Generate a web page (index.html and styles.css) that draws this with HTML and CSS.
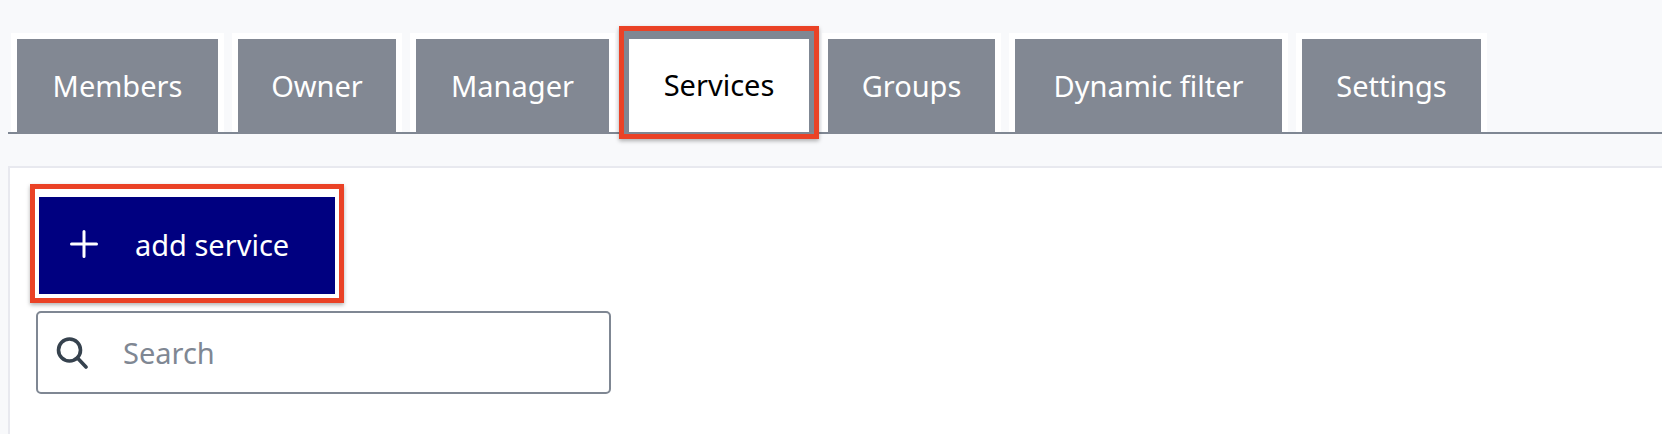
FILE: index.html
```html
<!DOCTYPE html>
<html lang="en">
<head>
    <meta charset="UTF-8">
    <meta name="viewport" content="width=device-width, initial-scale=1.0">
    <title>Services</title>
    <link rel="stylesheet" href="styles.css">
</head>
<body>

    <nav class="tabs">
        <a class="tab tab-members"><span class="tab-label">Members</span></a>
        <a class="tab tab-owner"><span class="tab-label">Owner</span></a>
        <a class="tab tab-manager"><span class="tab-label">Manager</span></a>
        <a class="tab-active">Services</a>
        <a class="tab tab-groups"><span class="tab-label">Groups</span></a>
        <a class="tab tab-filter"><span class="tab-label">Dynamic filter</span></a>
        <a class="tab tab-settings"><span class="tab-label">Settings</span></a>
    </nav>

    <main class="panel">
        <div class="callout">
            <button class="btn-add" type="button">
                <svg class="btn-icon" viewBox="0 0 28 28" aria-hidden="true">
                    <path d="M14 1.5v25M1.5 14h25"/>
                </svg>
                add service
            </button>
        </div>

        <label class="search">
            <svg class="search-icon" viewBox="0 0 32 32" aria-hidden="true">
                <circle cx="13.5" cy="13" r="11"/>
                <path d="M21.5 21l8.5 9"/>
            </svg>
            <input class="search-input" type="text" placeholder="Search">
        </label>
    </main>

</body>
</html>
```

FILE: styles.css
```css
* { margin: 0; padding: 0; box-sizing: border-box; font-family: "Noto Sans", sans-serif; }

body {
    display: flex;
    flex-direction: column;
    height: 100vh;
    overflow: hidden;
    background: #f8f9fb;
}

/* Tab row */
.tabs {
    display: flex;
    gap: 8px;
    height: 101px;
    margin: 33px 0 0 8px;
    padding-left: 3px;
    border-bottom: 2px solid #7f8793;
}

.tab {
    display: flex;
    height: 99px;
    padding: 6px 6px 0;
    background: white;
}

.tab-label {
    display: flex;
    flex: 1;
    align-items: center;
    justify-content: center;
    height: 95px;
    padding-bottom: 3px;
    background: #828893;
    color: white;
    font-size: 29px;
}

.tab-members { width: 213px; }
.tab-owner { width: 170px; }
.tab-manager { width: 205px; margin-right: 1px; }
.tab-groups { width: 179px; }
.tab-filter { width: 279px; }
.tab-settings { width: 191px; }

.tab-active {
    display: flex;
    align-items: center;
    justify-content: center;
    width: 190px;
    height: 103px;
    margin-top: -2px;
    padding-bottom: 2px;
    border: solid #7f8793;
    border-width: 8px 5px 2px;
    background: white;
    color: black;
    font-size: 29px;
    box-shadow: 0 0 0 5px #ea4226, 0 2px 4px 5px rgba(0, 0, 0, 0.3);
    position: relative;
}

/* Content panel */
.panel {
    flex: 1;
    margin: 32px 0 0 8px;
    padding: 16px 0 0 20px;
    border: solid #e8e9ef;
    border-width: 2px 0 0 2px;
    background: white;
}

.callout {
    display: flex;
    width: 314px;
    height: 119px;
    padding: 8px 4px 4px;
    border: 5px solid #ea4226;
    box-shadow: 0 2px 4px rgba(0, 0, 0, 0.3);
}

.btn-add {
    display: flex;
    flex: 1;
    align-items: center;
    padding: 0 0 3px 31px;
    border: none;
    background: #000080;
    color: white;
    font-size: 29px;
}

.btn-icon {
    width: 28px;
    height: 28px;
    margin-right: 37px;
    fill: none;
    stroke: white;
    stroke-width: 3;
    stroke-linecap: round;
}

.search {
    display: flex;
    align-items: center;
    width: 575px;
    height: 83px;
    margin: 8px 0 0 6px;
    padding-left: 18px;
    border: 2px solid #7f8793;
    border-radius: 5px;
}

.search-icon {
    flex: none;
    width: 32px;
    height: 32px;
    margin-right: 35px;
    fill: none;
    stroke: #36424e;
    stroke-width: 3.6;
    stroke-linecap: round;
}

.search-input {
    flex: 1;
    min-width: 0;
    border: none;
    outline: none;
    background: none;
    font-size: 29px;
}

.search-input::placeholder { color: #7f8793; opacity: 1; }
```
